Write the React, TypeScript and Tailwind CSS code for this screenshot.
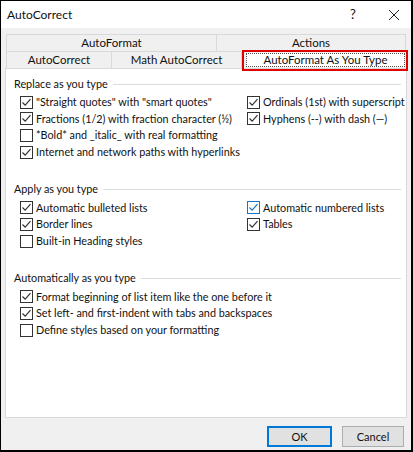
import { ReactNode } from 'react';

type Item = { label: string; checked: boolean; focus?: boolean };

function CheckIcon({ checked, focus }: { checked: boolean; focus?: boolean }) {
  return (
    <span
      className={`w-[13px] h-[13px] shrink-0 bg-white border flex items-center justify-center ${
        focus ? 'border-[#1a73c7]' : 'border-[#333333]'
      }`}
    >
      {checked && (
        <svg width="11" height="11" viewBox="0 0 11 11">
          <path d="M1.5 5.5 L4.2 8.2 L9.5 2.2" fill="none" stroke={focus ? '#1a73c7' : '#333333'} strokeWidth="1.2" />
        </svg>
      )}
    </span>
  );
}

function Check({ item }: { item: Item }) {
  return (
    <div className="h-[16.67px] flex items-center gap-[3px]">
      <CheckIcon checked={item.checked} focus={item.focus} />
      <span className="whitespace-nowrap">{item.label}</span>
    </div>
  );
}

function Section({ title, children }: { title: string; children: ReactNode }) {
  return (
    <div>
      <div className="h-[12px] flex items-center gap-[5px] pr-[5px]">
        <span className="whitespace-nowrap">{title}</span>
        <div className="flex-1 h-px bg-[#dcdcdc]" />
      </div>
      <div className="pl-[6px] pt-[4px]">{children}</div>
    </div>
  );
}

function Tab({ label, w }: { label: string; w: string }) {
  return (
    <div className={`${w} flex items-center justify-center border-r border-[#d9d9d9]`}>
      {label}
    </div>
  );
}

export default function App() {
  return (
    <div
      className="w-[413px] h-[452px] border-l border-t border-r-2 border-b-2 border-black bg-[#f0f0f0] flex flex-col text-[10.8px] text-[#111] leading-none"
      style={{ fontFamily: 'Lato, "Noto Sans", sans-serif' }}
    >
      <div className="h-[27px] bg-white flex items-center pl-[6px] shrink-0">
        <span className="flex-1 text-[12px]">AutoCorrect</span>
        <span className="w-[20px] text-center mr-[25px] text-[13px]">?</span>
        <svg width="12" height="12" viewBox="0 0 12 12" className="mr-[11px]">
          <path d="M1 1 L11 11 M11 1 L1 11" stroke="#222" strokeWidth="1" />
        </svg>
      </div>

      <div className="px-[4px] pt-[6px] flex flex-col flex-1">
        <div className="h-[17px] flex border-t border-l border-[#d9d9d9] mx-[1px] text-[11.5px]">
          <Tab label="AutoFormat" w="w-[210px]" />
          <Tab label="Actions" w="flex-1" />
        </div>
        <div className="h-[17px] flex border-t border-l border-[#d9d9d9] mx-[1px] text-[11.5px]">
          <Tab label="AutoCorrect" w="w-[105px]" />
          <Tab label="Math AutoCorrect" w="w-[130px]" />
          <div className="w-[3px]" />
          <div className="flex-1 relative">
            <div className="absolute left-[-3px] right-[-2px] top-[-2px] bottom-[-3px] border-2 border-[#e00000]" />
            <div className="absolute inset-[1px] bg-white border border-dotted border-[#555] flex items-center justify-center">
              AutoFormat As You Type
            </div>
          </div>
        </div>

        <div className="h-[350px] bg-white border border-[#d9d9d9] pl-[8px] pt-[9px] flex flex-col">
          <Section title="Replace as you type">
            <div className="flex">
              <div className="w-[227px]">
                <Check item={{ label: '"Straight quotes" with "smart quotes"', checked: true }} />
                <Check item={{ label: 'Fractions (1/2) with fraction character (½)', checked: true }} />
                <Check item={{ label: '*Bold* and _italic_ with real formatting', checked: false }} />
                <Check item={{ label: 'Internet and network paths with hyperlinks', checked: true }} />
              </div>
              <div>
                <Check item={{ label: 'Ordinals (1st) with superscript', checked: true }} />
                <Check item={{ label: 'Hyphens (--) with dash (—)', checked: true }} />
              </div>
            </div>
          </Section>
          <div className="h-[23px]" />
          <Section title="Apply as you type">
            <div className="flex">
              <div className="w-[227px]">
                <Check item={{ label: 'Automatic bulleted lists', checked: true }} />
                <Check item={{ label: 'Border lines', checked: true }} />
                <Check item={{ label: 'Built-in Heading styles', checked: false }} />
              </div>
              <div>
                <Check item={{ label: 'Automatic numbered lists', checked: true, focus: true }} />
                <Check item={{ label: 'Tables', checked: true }} />
              </div>
            </div>
          </Section>
          <div className="h-[23px]" />
          <Section title="Automatically as you type">
            <Check item={{ label: 'Format beginning of list item like the one before it', checked: true }} />
            <Check item={{ label: 'Set left- and first-indent with tabs and backspaces', checked: true }} />
            <Check item={{ label: 'Define styles based on your formatting', checked: false }} />
          </Section>
        </div>

        <div className="flex justify-end gap-[10px] pt-[8px] pr-[3px]">
          <button className="w-[65px] h-[21px] bg-[#e1e1e1] border-2 border-[#0078d7] text-[11px]">OK</button>
          <button className="w-[62px] h-[21px] bg-[#e1e1e1] border border-[#adadad] text-[11px]">Cancel</button>
        </div>
      </div>
    </div>
  );
}
